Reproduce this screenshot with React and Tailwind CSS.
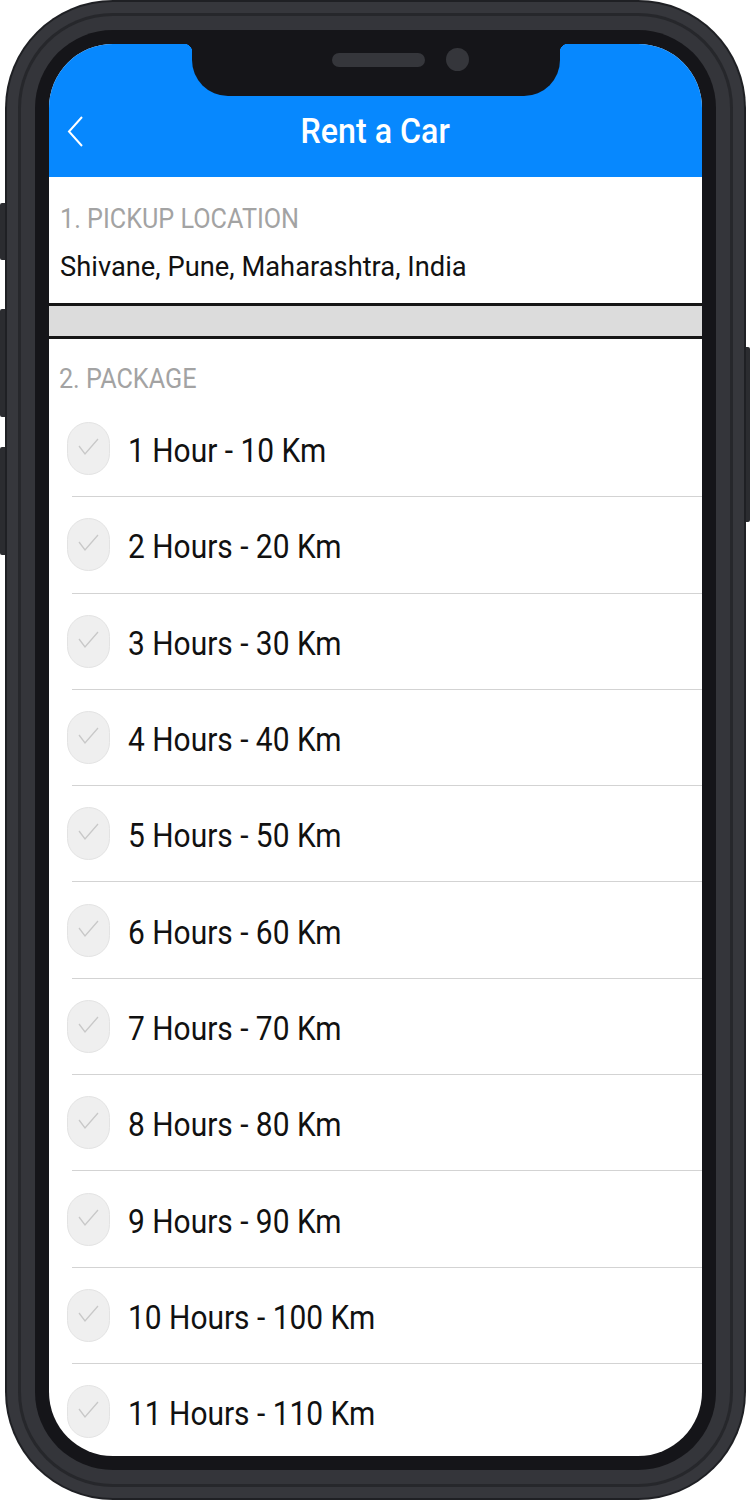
import React from 'react';

const packages = [
  '1 Hour - 10 Km',
  '2 Hours - 20 Km',
  '3 Hours - 30 Km',
  '4 Hours - 40 Km',
  '5 Hours - 50 Km',
  '6 Hours - 60 Km',
  '7 Hours - 70 Km',
  '8 Hours - 80 Km',
  '9 Hours - 90 Km',
  '10 Hours - 100 Km',
  '11 Hours - 110 Km',
];

function CheckCircle() {
  return (
    <div className="w-[43px] h-[53px] shrink-0 rounded-full bg-[#efefef] border border-[#e3e3e3]">
      <svg width="43" height="53" viewBox="0 0 43 53" className="-ml-px -mt-px">
        <polyline points="12,24 18,32 31,17" fill="none" stroke="#c8c8c8" strokeWidth="1.3" />
      </svg>
    </div>
  );
}

export default function App() {
  return (
    <div className="w-[750px] h-[1503px] bg-white relative overflow-hidden font-[Roboto,sans-serif]">
      {/* side buttons */}
      <div className="absolute left-0 top-[203px] w-[6px] h-[57px] rounded-l-[2px] bg-[#2b2c30]" />
      <div className="absolute left-0 top-[309px] w-[6px] h-[108px] rounded-l-[2px] bg-[#2b2c30]" />
      <div className="absolute left-0 top-[447px] w-[6px] h-[108px] rounded-l-[2px] bg-[#2b2c30]" />
      <div className="absolute right-0 top-[347px] w-[6px] h-[175px] rounded-r-[2px] bg-[#2b2c30]" />

      {/* phone frame */}
      <div className="ml-[5px] w-[741px] h-[1500px] rounded-[108px] bg-[#1f2024] p-[2px] relative">
        <div className="h-full rounded-[106px] bg-[#36373c] p-[11px]">
          <div className="h-full rounded-[95px] bg-[#26272b] p-[3px]">
            <div className="h-full rounded-[92px] bg-[#34353a] p-[14px]">
              <div className="h-full rounded-[78px] bg-[#151519] p-[14px]">
                <div className="h-full rounded-[64px] bg-white overflow-hidden relative">
                  {/* notch */}
                  <div className="absolute left-[143px] top-0 w-[368px] h-[52px] bg-[#151519] rounded-b-[36px] z-10">
                    <div className="flex items-center h-[31px] pl-[140px] gap-[21px]">
                      <div className="w-[93px] h-[14px] rounded-full bg-[#35363b]" />
                      <div className="w-[23px] h-[23px] rounded-full bg-[#35363b]" />
                    </div>
                  </div>
                  <div className="absolute left-[135px] top-0 w-[8px] h-[8px] z-10 bg-[radial-gradient(circle_at_0%_100%,transparent_8px,#151519_8.5px)]" />
                  <div className="absolute left-[511px] top-0 w-[8px] h-[8px] z-10 bg-[radial-gradient(circle_at_100%_100%,transparent_8px,#151519_8.5px)]" />

                  {/* header */}
                  <div className="h-[133px] bg-[#0788fe] pt-[41px] px-[18px] grid grid-cols-[1fr_auto_1fr] items-center">
                    <svg width="17" height="33" viewBox="0 0 17 33">
                      <polyline points="15,2 2,16.5 15,31" fill="none" stroke="white" strokeWidth="2" />
                    </svg>
                    <span className="inline-block text-white text-[35px] leading-none font-medium scale-x-[0.92]">
                      Rent a Car
                    </span>
                    <div />
                  </div>

                  {/* pickup location */}
                  <div className="h-[126px] px-[11px] pt-[28px]">
                    <div className="text-[#a3a3a3] text-[28px] leading-[28px] origin-left scale-x-[0.9]">
                      1. PICKUP LOCATION
                    </div>
                    <div className="mt-[20px] text-[#111] text-[28px] leading-[28px] origin-left scale-x-[0.975]">
                      Shivane, Pune, Maharashtra, India
                    </div>
                  </div>
                  <div className="h-[36px] bg-[#dcdcdc] border-y-[3px] border-[#161616]" />

                  {/* package */}
                  <div className="pt-[26px]">
                    <div className="px-[11px] text-[#a3a3a3] text-[28px] leading-[28px] origin-left scale-x-[0.9]">
                      2. PACKAGE
                    </div>
                    <div className="mt-[8px]">
                      {packages.map((p) => (
                        <div key={p} className="ml-[23px] border-b border-[#d3d3d3]">
                          <div className="-ml-[5px] h-[95.3px] flex items-center">
                            <CheckCircle />
                            <span className="ml-[18px] pt-[3px] inline-block text-[#111] text-[34px] leading-none origin-left scale-x-[0.88] whitespace-nowrap">
                              {p}
                            </span>
                          </div>
                        </div>
                      ))}
                    </div>
                  </div>
                </div>
              </div>
            </div>
          </div>
        </div>
      </div>
    </div>
  );
}
